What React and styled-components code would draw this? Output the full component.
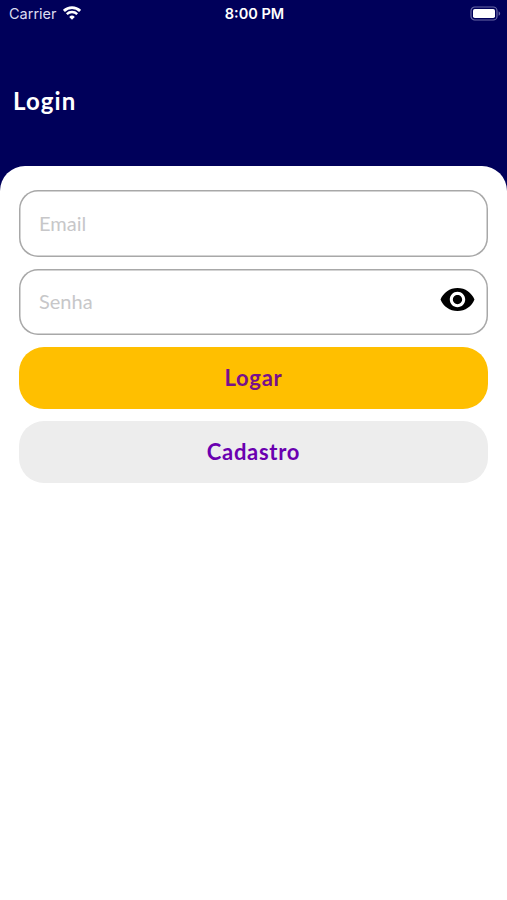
import React, { useState } from 'react';
import styled, { createGlobalStyle, css } from 'styled-components';
import { MdVisibility } from 'react-icons/md';

const Login = () => {
  const [email, setEmail] = useState('');
  const [password, setPassword] = useState('');
  const [showPassword, setShowPassword] = useState(false);

  return (
    <Screen>
      <StatusBar>
        <Carrier>
          Carrier
          <WifiIcon />
        </Carrier>
        <Clock>8:00 PM</Clock>
        <BatteryIcon />
      </StatusBar>
      <Header>
        <Title>Login</Title>
      </Header>
      <Content>
        <Field>
          <Input
            placeholder="Email"
            value={email}
            onChange={e => setEmail(e.target.value)}
          />
        </Field>
        <Field>
          <Input
            type={showPassword ? 'text' : 'password'}
            placeholder="Senha"
            value={password}
            onChange={e => setPassword(e.target.value)}
          />
          <EyeButton onClick={() => setShowPassword(!showPassword)}>
            <MdVisibility />
          </EyeButton>
        </Field>
        <Button $primary>Logar</Button>
        <Button>Cadastro</Button>
      </Content>
    </Screen>
  );
};

const WifiIcon = () => (
  <svg width="18" height="14" viewBox="0 0 18 14" fill="none">
    <path d="M.9 4.9a11.6 11.6 0 0 1 16.2 0" stroke="#fff" strokeWidth="2.8" />
    <path d="M3.8 8.2a7.4 7.4 0 0 1 10.4 0" stroke="#fff" strokeWidth="2.4" />
    <path d="M9 13.7 6.2 10.9a4 4 0 0 1 5.6 0z" fill="#fff" />
  </svg>
);

const BatteryIcon = () => (
  <svg width="31" height="15" viewBox="0 0 31 15" fill="none">
    <rect x="1" y="1" width="26" height="13" rx="3.8" stroke="#6a69a6" strokeWidth="1.2" />
    <rect x="3" y="3" width="22" height="9" rx="1.8" fill="#fff" />
    <path d="M28.6 5.2v4.6a2.5 2.5 0 0 0 0-4.6z" fill="#6a69a6" />
  </svg>
);

export default function App() {
  return (
    <>
      <GlobalStyle />
      <Login />
    </>
  );
}

// Styled Components
const GlobalStyle = createGlobalStyle`
  * {
    box-sizing: border-box;
  }

  body {
    margin: 0;
    background-color: #00005a;
    font-family: Lato, sans-serif;
  }
`;

const Screen = styled.div`
  display: flex;
  flex-direction: column;
  height: 100vh;
  overflow: hidden;
  background-color: #00005a;
`;

const StatusBar = styled.div`
  display: grid;
  grid-template-columns: 1fr auto 1fr;
  align-items: center;
  height: 27px;
  padding: 0 6px 0 9px;
  color: white;
  font-family: Inter, sans-serif;

  > svg {
    justify-self: end;
  }
`;

const Carrier = styled.div`
  display: flex;
  align-items: center;
  gap: 6px;
  color: #dcdcf0;
  font-size: 14.5px;

  svg {
    margin-top: -2px;
  }
`;

const Clock = styled.div`
  padding-right: 1px;
  font-size: 14.5px;
  font-weight: 600;
`;

const Header = styled.header`
  display: flex;
  align-items: center;
  height: 139px;
  padding: 7px 13px 0;
`;

const Title = styled.h1`
  margin: 0;
  font-size: 24px;
  font-weight: 700;
  letter-spacing: 1.1px;
  color: white;
`;

const Content = styled.main`
  display: flex;
  flex: 1;
  flex-direction: column;
  gap: 12px;
  padding: 24px 19px;
  border-radius: 25px 25px 0 0;
  background-color: white;
`;

const Field = styled.div`
  display: flex;
  align-items: center;
  height: 66.5px;
  padding: 0 12px 0 20px;
  border-radius: 19px;
  box-shadow: inset 0 0 0 1.5px #a8a8a8;
`;

const Input = styled.input`
  flex: 1;
  min-width: 0;
  padding: 0 0 1px;
  border: none;
  outline: none;
  background: none;
  font-family: Lato, sans-serif;
  font-size: 20px;

  &::placeholder {
    color: #c7c7c9;
    opacity: 1;
  }
`;

const EyeButton = styled.button`
  display: flex;
  margin-top: -5px;
  padding: 0;
  border: none;
  background: none;
  color: black;
  font-size: 37px;
`;

const Button = styled.button`
  height: 62px;
  padding: 0 0 2px;
  border: none;
  border-radius: 25px;
  background-color: #ededed;
  font-family: Lato, sans-serif;
  font-size: 22px;
  font-weight: 700;
  letter-spacing: 0.7px;
  color: #6a00b0;
  ${props =>
    props.$primary &&
    css`
      background-color: #ffbf00;
      color: #78108c;
    `}
`;
